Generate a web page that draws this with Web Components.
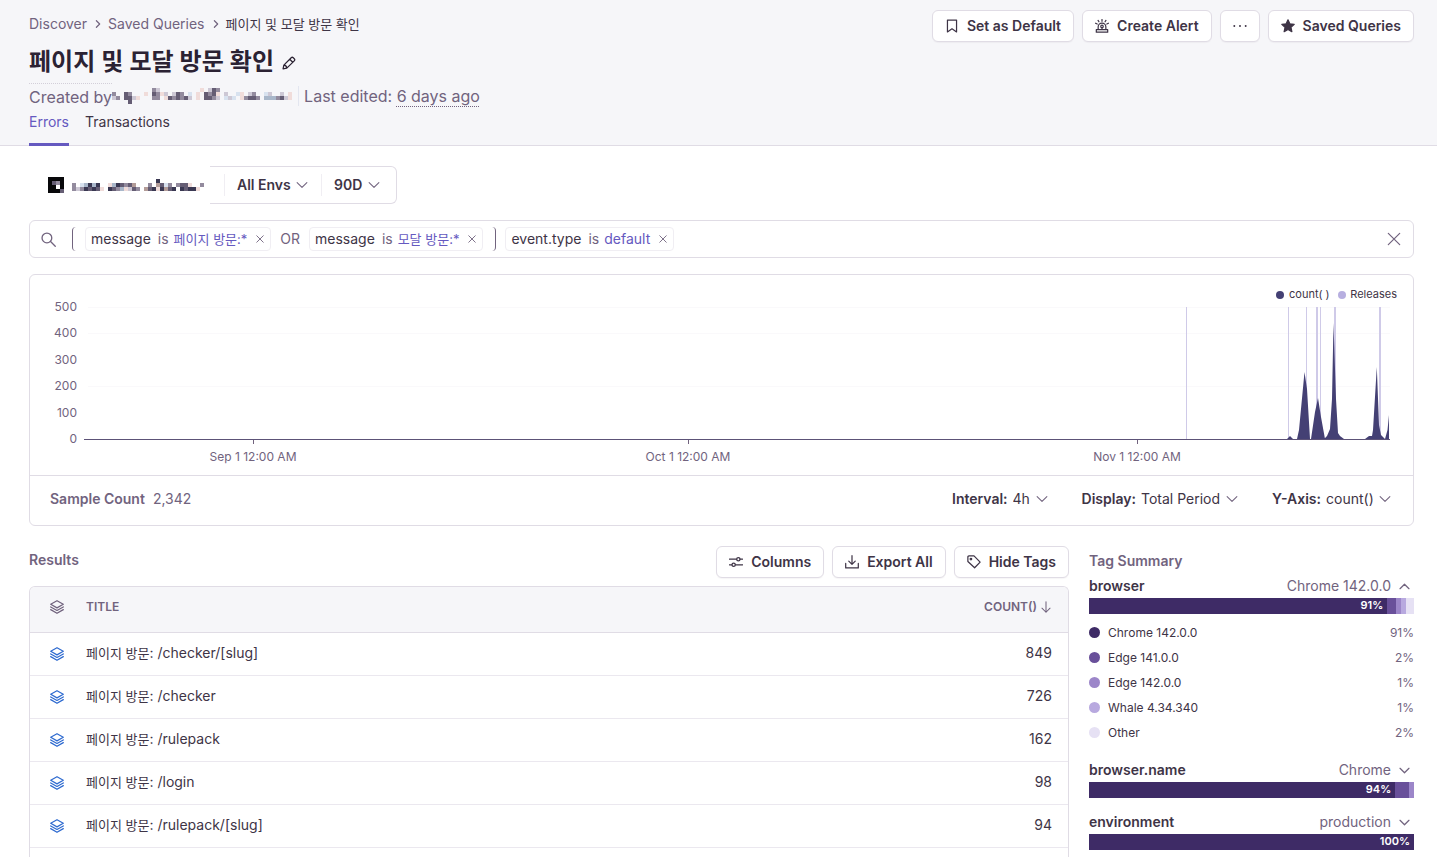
<!DOCTYPE html>
<html lang="ko">
<head>
  <meta charset="UTF-8">
  <meta name="viewport" content="width=device-width, initial-scale=1">
  <title>페이지 및 모달 방문 확인 - Discover</title>
  <style>
    :root {
      --text: #3e3446;
      --heading: #2b2233;
      --muted: #71637e;
      --purple: #6559c0;
      --border: #e0dce5;
      --surface: #f6f6f9;
      --blue: #2f6bd0;
    }
    body {
      margin: 0;
      background: #fff;
      color: var(--text);
      font: 14px/20px Inter, "Noto Sans CJK KR", sans-serif;
    }
    discover-page { min-height: 100vh; }
  </style>
</head>
<body>
  <discover-page></discover-page>

  <script>
    // Registers an element whose shadow root is built from a template string.
    function define(name, render) {
      customElements.define(name, class extends HTMLElement {
        constructor() {
          super();
          this.attachShadow({ mode: 'open' });
        }
        connectedCallback() {
          const template = document.createElement('template');
          template.innerHTML = render(this);
          this.shadowRoot.replaceChildren(template.content.cloneNode(true));
        }
      });
    }

    const attr = (el, name, fallback = '') => el.getAttribute(name) || fallback;

    const ICONS = {
      bookmark: '<path d="M2.8 1.2h10.4v13.6L8 11.2l-5.2 3.6z"/>',
      siren: '<path d="M1.5 12.2h13v2.9h-13zM3.6 12.2V9a4.4 4.4 0 0 1 8.8 0v3.2M8 .6v2M3.5 1.6l1 1.6M12.5 1.6l-1 1.6M.7 4.8l1.8.9M15.3 4.8l-1.8.9M8 10v2"/><circle cx="8" cy="8.5" r="1.4"/>',
      dots: '<g fill="currentColor" stroke="none"><circle cx="1.5" cy="8" r="1.1"/><circle cx="8" cy="8" r="1.1"/><circle cx="14.5" cy="8" r="1.1"/></g>',
      star: '<path fill="currentColor" d="M8 .9l2.1 4.6 5 .6-3.7 3.4 1 5L8 12l-4.4 2.5 1-5L.9 6.1l5-.6z"/>',
      pencil: '<path d="M1.2 14.8l.9-4.3L10.5 2a1.7 1.7 0 0 1 2.4 0L14 3.1a1.7 1.7 0 0 1 0 2.4L5.5 13.9zM8.8 3.7l3.5 3.5M2.2 10.5c2 .2 3.1 1.3 3.3 3.3"/>',
      chevron: '<path d="M1.5 4.8L8 11.3l6.5-6.5"/>',
      up: '<path d="M1.5 11.2L8 4.7l6.5 6.5"/>',
      right: '<path d="M4.8 1.5L11.3 8l-6.5 6.5"/>',
      search: '<circle cx="6.3" cy="6.3" r="5.2"/><path d="M10.2 10.2l5 5"/>',
      close: '<path d="M1.5 1.5l13 13M14.5 1.5l-13 13"/>',
      sliders: '<path d="M.5 4.8h8.2M12.7 4.8h2.8M.5 11.2h2.8M7.3 11.2h8.2"/><circle cx="10.7" cy="4.8" r="1.9"/><circle cx="5.3" cy="11.2" r="1.9"/>',
      download: '<path d="M8 .8v9.8M4.3 7L8 10.7 11.7 7M.8 9.6v5.2h14.4V9.6"/>',
      tag: '<path d="M1 2.2Q1 1 2.2 1H8l7 7.2-6.3 6.4L1 7.5z"/><circle cx="4.5" cy="4.6" r=".9"/>',
      layers: '<path d="M8 .8l7.2 4.1L8 9 .8 4.9zM.8 7.9L8 12l7.2-4.1M.8 11L8 15.2l7.2-4.2"/>',
      down: '<path d="M8 1v14M2.6 9.6L8 15l5.4-5.4"/>'
    };

    define('ui-icon', el => `
      <style>
        :host { display: inline-flex; flex: none; }
        svg { display: block; fill: none; stroke: currentColor; stroke-linejoin: round; stroke-linecap: round; }
      </style>
      <svg viewBox="0 0 16 16" width="${attr(el, 'size', 14)}" height="${attr(el, 'size', 14)}"
        stroke-width="${attr(el, 'weight', '1.4')}" aria-hidden="true">${ICONS[attr(el, 'name')]}</svg>
    `);

    define('ui-button', el => `
      <style>
        :host { display: inline-block; }
        button {
          display: flex; align-items: center; gap: 8px;
          height: 32px; padding: 0 12px 1px;
          border: 1px solid var(--border); border-radius: 6px;
          background: #fff; color: var(--text);
          box-shadow: 0 1px 1px rgba(43, 34, 51, .04);
          font: inherit; font-weight: 600; cursor: pointer; white-space: nowrap;
        }
      </style>
      <button type="button" aria-label="${attr(el, 'label', el.textContent.trim())}">
        <ui-icon name="${attr(el, 'icon')}"></ui-icon><slot></slot>
      </button>
    `);

    define('ui-select', el => `
      <style>
        :host { display: inline-flex; align-items: center; gap: 5px; white-space: nowrap; }
        label { font-weight: 600; }
        select {
          appearance: none; border: 0; padding: 0; margin: 0; background: none;
          color: inherit; font: inherit; line-height: 20px;
        }
        :host([strong]) select { font-weight: 600; }
        ui-icon { color: var(--muted); }
      </style>
      ${el.hasAttribute('label') ? `<label for="s">${attr(el, 'label')}</label>` : ''}
      <select id="s" aria-label="${attr(el, 'name', attr(el, 'label'))}"><option>${attr(el, 'value')}</option></select>
      <ui-icon name="chevron" size="12"></ui-icon>
    `);

    // Redacted names are drawn as a grid of 4px tiles, one letter per tile.
    const TILES = {
      k: '#08080a', d: '#655d74', n: '#3a3852', g: '#938b9e', l: '#cdc8d5',
      b: '#a9b7ca', c: '#d8e2ef', p: '#f0dcda', r: '#b39c98', w: '#fff'
    };
    const MOSAICS = {
      author: [
        '..........gl..........p.ldg...................',
        'g..dg...p.dgpl.ldg.c.p.dgdp.l..cp.lg..cl..l.p.',
        'lg.ddlp...gg.pdgdgdl.p.ddgl.clc.pgddg.bbbgdlp.',
        '....d.........................................'
      ],
      avatar: ['kkkk', 'kdgk', 'kkwk', 'kkkd'],
      project: [
        '.....................n............',
        'g.cbnbn..pbndgdr...g.rdcg.gddp..g.',
        'glgndndp.ndgbpldg.rdnpnrdn.ndnnp..'
      ]
    };

    define('pixel-mosaic', el => {
      const rows = MOSAICS[attr(el, 'name')];
      const width = rows[0].length * 4;
      const tiles = rows.map((row, y) => [...row].map((t, x) => TILES[t]
        ? `<rect x="${x * 4}" y="${y * 4}" width="4" height="4" fill="${TILES[t]}"/>` : '').join('')).join('');
      return `
        <style>
          :host { display: inline-block; flex: none; }
          svg { display: block; shape-rendering: crispEdges; }
        </style>
        <svg width="${width}" height="${rows.length * 4}" aria-hidden="true">${tiles}</svg>
      `;
    });

    define('page-header', () => `
      <style>
        :host { display: block; background: var(--surface); border-bottom: 1px solid var(--border); padding: 10px 23px 0 29px; }
        .top { display: flex; justify-content: space-between; align-items: flex-start; }
        .actions { display: flex; gap: 8px; }
        .crumbs { display: flex; align-items: center; gap: 7px; padding-top: 4px; color: var(--muted); }
        .crumbs a { color: inherit; text-decoration: none; }
        .crumbs a:not(:first-child) { margin-left: -1px; }
        .crumbs span { color: var(--text); font-size: 13px; margin-left: -1px; }
        .title { display: flex; align-items: center; gap: 8px; margin-top: 8px; }
        h1 { margin: 0; font-size: 24px; line-height: 40px; font-weight: 600; color: var(--heading); }
        .title button { border: 0; background: none; padding: 4px 0 0; color: var(--heading); }
        .meta { display: flex; align-items: center; color: var(--muted); font-size: 16px; line-height: 26px; height: 28px; margin-bottom: 2px; }
        .by { border-top: 1px dotted #d3cfd9; }
        .edited { border-left: 1px solid #e3e6f0; padding-left: 5px; margin-left: 2px; line-height: 20px; }
        time { text-decoration: underline dotted 1px; text-underline-offset: 4px; }
        nav.tabs { display: flex; gap: 16px; margin-bottom: -1px; }
        .tabs a { color: var(--text); text-decoration: none; padding-bottom: 11px; border-bottom: 3px solid transparent; }
        .tabs a[aria-current] { color: var(--purple); border-color: var(--purple); }
      </style>
      <header>
        <div class="top">
          <div>
            <nav class="crumbs" aria-label="Breadcrumb">
              <a href="#discover">Discover</a><ui-icon name="right" size="8" weight="2.4"></ui-icon>
              <a href="#saved">Saved Queries</a><ui-icon name="right" size="8" weight="2.4"></ui-icon>
              <span>페이지 및 모달 방문 확인</span>
            </nav>
            <div class="title">
              <h1>페이지 및 모달 방문 확인</h1>
              <button type="button" aria-label="Edit name"><ui-icon name="pencil"></ui-icon></button>
            </div>
            <div class="meta">
              <span class="by">Created by</span>
              <pixel-mosaic name="author"></pixel-mosaic>
              <span class="edited">Last edited: <time>6 days ago</time></span>
            </div>
          </div>
          <div class="actions">
            <ui-button icon="bookmark">Set as Default</ui-button>
            <ui-button icon="siren">Create Alert</ui-button>
            <ui-button icon="dots" label="More actions"></ui-button>
            <ui-button icon="star">Saved Queries</ui-button>
          </div>
        </div>
        <nav class="tabs" aria-label="Dataset">
          <a href="#errors" aria-current="page">Errors</a>
          <a href="#transactions">Transactions</a>
        </nav>
      </header>
    `);

    define('page-filters', () => `
      <style>
        :host { display: flex; height: 38px; }
        .project { display: flex; align-items: center; gap: 8px; width: 162px; padding-left: 19px; }
        .group {
          display: flex; align-items: center; padding: 0 16px 1px 14px;
          border: 1px solid var(--border); border-left: 0; border-radius: 0 6px 6px 0;
        }
        ui-select { padding: 1px 0; border-left: 1px solid #f0eef3; padding-left: 12px; }
        ui-select + ui-select { margin-left: 13px; }
      </style>
      <div class="project">
        <pixel-mosaic name="avatar"></pixel-mosaic>
        <pixel-mosaic name="project"></pixel-mosaic>
      </div>
      <div class="group">
        <ui-select strong name="Environment" value="All Envs"></ui-select>
        <ui-select strong name="Period" value="90D"></ui-select>
      </div>
    `);

    define('filter-token', el => `
      <style>
        :host {
          display: inline-flex; align-items: center; height: 22px; padding: 0 6px 0 5px;
          border: 1px solid #f0eef3; border-radius: 4px; white-space: nowrap;
        }
        .op { color: var(--muted); margin: 0 5px 0 7px; }
        .value { color: var(--purple); }
        :host(:lang(ko)) .value { font-size: 13px; }
        button { display: flex; border: 0; background: none; padding: 0; margin-left: 9px; color: var(--muted); }
      </style>
      <span>${attr(el, 'key')}</span><span class="op">is</span><span class="value"><slot></slot></span>
      <button type="button" aria-label="Remove filter"><ui-icon name="close" size="8" weight="1.8"></ui-icon></button>
    `);

    define('search-bar', () => `
      <style>
        :host {
          display: flex; align-items: center; height: 36px; padding: 0 12px 0 11px;
          border: 1px solid var(--border); border-radius: 6px; color: var(--text);
        }
        .tokens { display: flex; align-items: center; gap: 9px; margin-left: 16px; }
        .paren { width: 3px; height: 24px; border: solid var(--muted); border-width: 0 0 0 1px; border-radius: 4px 0 0 4px; }
        .paren.end { border-width: 0 1px 0 0; border-radius: 0 4px 4px 0; }
        .or, ui-icon { color: var(--muted); }
        input { flex: 1; min-width: 20px; border: 0; outline: 0; background: none; font: inherit; }
        button { display: flex; border: 0; padding: 0; background: none; }
      </style>
      <ui-icon name="search" size="15" weight="1.4"></ui-icon>
      <div class="tokens">
        <span class="paren"></span>
        <filter-token key="message" lang="ko">페이지 방문:*</filter-token>
        <span class="or">OR</span>
        <filter-token key="message" lang="ko">모달 방문:*</filter-token>
        <span class="paren end"></span>
        <filter-token key="event.type" lang="en">default</filter-token>
      </div>
      <input type="text" aria-label="Search events">
      <button type="button" aria-label="Clear search"><ui-icon name="close" weight="1.4"></ui-icon></button>
    `);

    define('event-chart', () => {
      const yLabels = [500, 400, 300, 200, 100, 0];
      const y = v => Math.round(164 - v * 0.264);
      const releases = [[1156, 1], [1258, 1], [1276, 1], [1286, 2], [1290, 1], [1304, 2], [1349, 2]];
      const ticks = [[223, 'Sep 1 12:00 AM'], [658, 'Oct 1 12:00 AM'], [1107, 'Nov 1 12:00 AM']];
      return `
        <style>
          :host { display: block; }
          svg { display: block; width: 100%; height: auto; font-size: 12px; }
          .axis { fill: var(--muted); }
          .tick { text-anchor: middle; }
          .legend { font-size: 11px; fill: var(--text); }
        </style>
        <svg viewBox="0 0 1383 200" role="img" aria-label="count() over the last 90 days">
          ${[500, 400, 200].map(v => `<path d="M58 ${y(v)}.5H1360" stroke="#faf9fb"/>`).join('')}
          ${yLabels.map(v => `<text class="axis" x="47" y="${y(v) + 4}" text-anchor="end">${v}</text>`).join('')}
          ${releases.map(([x, w]) => `<rect x="${x}" y="32" width="${w}" height="132" fill="#cfcae8"/>`).join('')}
          <path fill="#444074" d="M1257 164l3-3 3 3zM1267 164l2-9 5.5-58 2.5 17 3 50zM1281 164l4-27 3-14 3 19 4 22zM1294 164l3-3 3-7 2-30 1.500-76 2.500 76 2 34 2 3 4 3zM1335 164l4-3h3l1-6 3.800-63 2.200 58 2 10 4 4zM1355 164l2.500-9 1.500-15v24z"/>
          <path d="M54 164.5H1360" stroke="#5c5277"/>
          ${ticks.map(([x, t]) => `<path d="M${x}.5 165v4" stroke="#71637e"/><text class="axis tick" x="${x}" y="186">${t}</text>`).join('')}
          <circle cx="1250" cy="20" r="4" fill="#444074"/><text class="legend" x="1259" y="23">count( )</text>
          <circle cx="1312" cy="20" r="4" fill="#b7afe0"/><text class="legend" x="1367" y="23" text-anchor="end">Releases</text>
        </svg>
      `;
    });

    define('chart-panel', () => `
      <style>
        :host { display: block; border: 1px solid var(--border); border-radius: 6px; }
        footer {
          display: flex; align-items: center; height: 46px; padding: 0 22px 3px 20px;
          border-top: 1px solid var(--border);
        }
        .count { display: flex; gap: 8px; color: var(--muted); flex: 1; }
        .count b { font-weight: 600; }
        .controls { display: flex; gap: 34px; }
      </style>
      <event-chart></event-chart>
      <footer>
        <div class="count"><b>Sample Count</b><span>2,342</span></div>
        <div class="controls">
          <ui-select label="Interval:" value="4h"></ui-select>
          <ui-select label="Display:" value="Total Period"></ui-select>
          <ui-select label="Y-Axis:" value="count()"></ui-select>
        </div>
      </footer>
    `);

    const ROWS = [
      ['/checker/[slug]', 849],
      ['/checker', 726],
      ['/rulepack', 162],
      ['/login', 98],
      ['/rulepack/[slug]', 94]
    ];

    define('results-table', () => `
      <style>
        :host { display: flex; flex-direction: column; }
        .bar { display: flex; align-items: center; gap: 8px; margin-bottom: 8px; }
        h2 { flex: 1; margin: 0; font-size: 14px; line-height: 28px; font-weight: 600; color: var(--muted); align-self: flex-start; }
        .frame { flex: 1; border: 1px solid var(--border); border-bottom: 0; border-radius: 6px 6px 0 0; overflow: hidden; }
        table { width: 100%; border-collapse: collapse; }
        th { height: 39px; padding: 0 16px 6px 0; background: var(--surface); border-bottom: 1px solid var(--border);
          color: var(--muted); font-size: 12px; line-height: 20px; font-weight: 600; text-align: left; }
        td { height: 39px; padding: 0 16px 3px 0; border-bottom: 1px solid #ebe8ef; line-height: 20px; }
        .icon { width: 36px; padding-left: 20px; padding-right: 0; }
        .icon ui-icon { vertical-align: middle; }
        td.icon { color: var(--blue); }
        .num { text-align: right; }
        th.num ui-icon { vertical-align: middle; margin-left: 3px; }
        .ko { font-size: 13px; }
      </style>
      <div class="bar">
        <h2>Results</h2>
        <ui-button icon="sliders">Columns</ui-button>
        <ui-button icon="download">Export All</ui-button>
        <ui-button icon="tag">Hide Tags</ui-button>
      </div>
      <div class="frame">
        <table>
          <thead>
            <tr><th class="icon"><ui-icon name="layers"></ui-icon></th><th>TITLE</th><th class="num">COUNT()<ui-icon name="down" size="12"></ui-icon></th></tr>
          </thead>
          <tbody>
            ${ROWS.map(([path, n]) => `<tr><td class="icon"><ui-icon name="layers"></ui-icon></td>
              <td><span class="ko">페이지 방문</span>: ${path}</td><td class="num">${n}</td></tr>`).join('')}
          </tbody>
        </table>
      </div>
    `);

    const SHADES = ['#3e2b66', '#69509a', '#9c86c9', '#b8a9df', '#e6e1f4'];

    define('tag-group', el => {
      const parts = attr(el, 'parts').split(',');
      const open = el.hasAttribute('open');
      return `
        <style>
          :host { display: block; }
          .head { display: flex; align-items: center; width: 100%; height: 24px; padding: 0 4px 0 0; border: 0; background: none;
            font: inherit; color: var(--muted); text-align: left; }
          .head b { flex: 1; font-weight: 600; color: var(--text); }
          ui-icon { margin-left: 8px; }
          .meter { display: flex; height: 16px; }
          .meter span { color: #fff; font-size: 11px; line-height: 15px; font-weight: 600; text-align: right; }
          .meter span:first-child { padding-right: 4px; box-sizing: border-box; }
        </style>
        <button class="head" type="button" aria-expanded="${open}">
          <b>${attr(el, 'name')}</b>${attr(el, 'value')}
          <ui-icon name="${open ? 'up' : 'chevron'}" size="11" weight="1.8"></ui-icon>
        </button>
        <div class="meter">
          ${parts.map((p, i) => `<span style="flex:${p} 0 0px;background:${SHADES[i]}">${i ? '' : attr(el, 'percent')}</span>`).join('')}
        </div>
        <slot></slot>
      `;
    });

    const BROWSERS = [
      ['Chrome 142.0.0', '91%'],
      ['Edge 141.0.0', '2%'],
      ['Edge 142.0.0', '1%'],
      ['Whale 4.34.340', '1%'],
      ['Other', '2%']
    ];

    define('tag-legend', () => `
      <style>
        :host { display: block; padding: 6px 0 1px; }
        ul { list-style: none; margin: 0; padding: 0; }
        li { display: flex; align-items: center; gap: 8px; height: 25px; font-size: 12px; }
        i { width: 11px; height: 11px; border-radius: 50%; }
        span { flex: 1; }
        em { font-style: normal; color: var(--muted); }
      </style>
      <ul>
        ${BROWSERS.map(([name, pct], n) => `<li><i style="background:${SHADES[n]}"></i><span>${name}</span><em>${pct}</em></li>`).join('')}
      </ul>
    `);

    define('tag-summary', () => `
      <style>
        :host { display: block; }
        h2 { margin: 0; padding-top: 1px; font-size: 14px; line-height: 27px; font-weight: 600; color: var(--muted); }
        .groups { display: flex; flex-direction: column; gap: 12px; }
      </style>
      <h2>Tag Summary</h2>
      <div class="groups">
        <tag-group open name="browser" value="Chrome 142.0.0" percent="91%" parts="298,9,5,5,8"><tag-legend></tag-legend></tag-group>
        <tag-group name="browser.name" value="Chrome" percent="94%" parts="306,14,5"></tag-group>
        <tag-group name="environment" value="production" percent="100%" parts="325"></tag-group>
      </div>
    `);

    define('discover-page', () => `
      <style>
        :host { display: flex; flex-direction: column; }
        main { flex: 1; display: flex; flex-direction: column; gap: 16px; padding: 20px 23px 0 29px; }
        page-filters { align-self: flex-start; }
        .body { flex: 1; display: grid; grid-template-columns: minmax(0, 1fr) 325px; gap: 20px; margin-top: 4px; }
      </style>
      <page-header></page-header>
      <main>
        <page-filters></page-filters>
        <search-bar></search-bar>
        <chart-panel></chart-panel>
        <div class="body">
          <results-table></results-table>
          <tag-summary></tag-summary>
        </div>
      </main>
    `);
  </script>
</body>
</html>
